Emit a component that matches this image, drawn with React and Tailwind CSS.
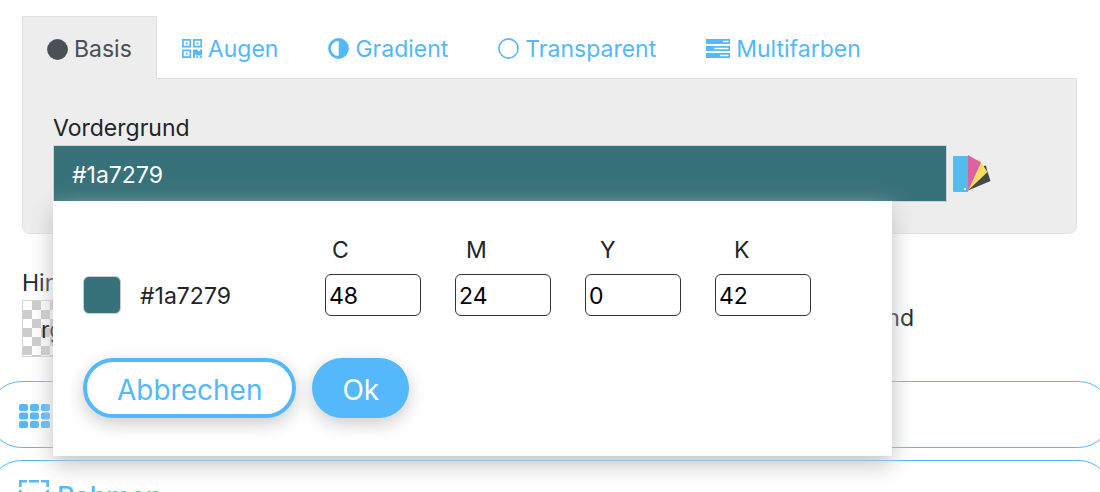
import React, { useState } from 'react';

const DotIcon = () => (
    <svg className="size-[21px]" viewBox="0 0 21 21" fill="currentColor">
        <circle cx="10.5" cy="10.5" r="10.4" />
    </svg>
);

const QrIcon = () => (
    <svg className="h-[19px] w-5" viewBox="0 0 20 19" fill="none" stroke="currentColor">
        <path strokeWidth="1.7" d="M.9.9h7.4v6.8H.9zM11.8.9h7.4v6.8h-7.4zM.9 11.3h7.4v6.8H.9z" />
        <path fill="currentColor" stroke="none" d="M3.7 3.4h1.8v1.8H3.7zM14.6 3.4h1.8v1.8h-1.8zM3.7 13.8h1.8v1.8H3.7zM11 10.4h4l1.5 1.6H18v-1.6h2v6h-5.5L13 15v4h-2zM14.2 17.2H16V19h-1.8zM17.8 17.2H20V19h-2.2z" />
    </svg>
);

const HalfIcon = () => (
    <svg className="size-[21px]" viewBox="0 0 21 21">
        <circle cx="10.5" cy="10.5" r="9" fill="none" stroke="currentColor" strokeWidth="2.8" />
        <path d="M10.7 1.5a9 9 0 0 1 0 18z" fill="currentColor" />
    </svg>
);

const RingIcon = () => (
    <svg className="size-[21px]" viewBox="0 0 21 21" fill="none" stroke="currentColor">
        <circle cx="10.5" cy="10.5" r="9.6" strokeWidth="1.6" />
    </svg>
);

const TasksIcon = () => (
    <svg className="h-[19px] w-6" viewBox="0 0 24 19" fill="currentColor" fillRule="evenodd">
        <path d="M0 0h24v5H0zM17 1.7v1.6h5.5V1.7z" />
        <path d="M0 7h24v5H0zM8.3 8.7v1.6h14.2V8.7z" />
        <path d="M0 14h24v5H0zM14 15.7v1.6h8.5v-1.6z" />
    </svg>
);

const SwatchFan = () => (
    <svg className="h-[37px] w-[38px]" viewBox="0 0 38 37">
        <path fill="#45474c" d="M31 11l2-.5 1 4.5 3.500 11L15 35.500z" />
        <path fill="#fddc62" d="M24 5.500L26.500 4 28 7.500l6.500 9.500L15 35.500z" />
        <path fill="#df629f" d="M15 0l13 7.500L15 36z" />
        <path fill="#55bbed" d="M1 1h14v36H1a1 1 0 0 1-1-1V2a1 1 0 0 1 1-1z" />
        <path fill="#d9f1fb" d="M11 33h2v2h-2z" />
    </svg>
);

const GridIcon = () => (
    <svg className="h-6 w-[31px]" viewBox="0 0 31 24" fill="currentColor">
        {[0, 8.5, 17].map(y =>
            [0, 11, 22].map(x => <rect key={`${x}-${y}`} x={x} y={y} width="9" height="7" rx="1.8" />)
        )}
    </svg>
);

const FrameIcon = () => (
    <svg className="size-[30px]" viewBox="0 0 30 30" fill="none" stroke="currentColor" strokeWidth="2.6">
        <path d="M1.3 7V1.3H8M10 1.3h10M22 1.3h6.7V7M28.7 10v10M28.7 22v6.7H22M20 28.7H10M8 28.7H1.3V22M1.3 20V10" />
    </svg>
);

const tabs = [
    { label: 'Basis', icon: <DotIcon /> },
    { label: 'Augen', icon: <QrIcon /> },
    { label: 'Gradient', icon: <HalfIcon /> },
    { label: 'Transparent', icon: <RingIcon /> },
    { label: 'Multifarben', icon: <TasksIcon /> },
];

const channels = ['C', 'M', 'Y', 'K'];

const App = () => {
    const [active, setActive] = useState('Basis');
    const [open, setOpen] = useState(true);
    const [color, setColor] = useState('#1a7279');
    const [cmyk, setCmyk] = useState({ C: '48', M: '24', Y: '0', K: '42' });

    return (
        <div className="h-screen overflow-hidden bg-white pt-4 font-['Inter',sans-serif] text-[23px] leading-9 text-[#212529]">
            <div className="mr-[23px] ml-[22px]">
                {/* Tabs */}
                <nav className="flex">
                    {tabs.map(tab => (
                        <button
                            key={tab.label}
                            type="button"
                            onClick={() => setActive(tab.label)}
                            className={
                                active === tab.label
                                    ? 'relative z-10 -mb-px flex h-[63px] items-center gap-1.5 border border-b-0 border-[#dee2e6] bg-[#ededed] px-6 pt-0.5 text-[#495057]'
                                    : 'flex h-[63px] items-center gap-1.5 border border-transparent px-6 pt-0.5 text-[#54b8fb]'
                            }
                        >
                            {tab.icon}
                            {tab.label}
                        </button>
                    ))}
                </nav>

                {/* Foreground color */}
                <div className="-mt-px rounded-b-lg border border-[#dee2e6] bg-[#ededed] px-[30px] pt-[30px] pb-[31px]">
                    <label htmlFor="foreground" className="block h-9 pt-px">Vordergrund</label>
                    <div className="relative flex items-center gap-1.5">
                        <input
                            id="foreground"
                            value={color}
                            onChange={e => setColor(e.target.value)}
                            className="h-[57px] w-[90%] border border-[#ced4da] bg-[#377179] px-[18px] pt-0.5 text-white outline-none"
                        />
                        <button type="button" aria-label="CMYK" onClick={() => setOpen(!open)}>
                            <SwatchFan />
                        </button>

                        {/* CMYK popover */}
                        {open && (
                            <div className="absolute top-14 left-0 z-20 w-[839px] bg-white px-[30px] pt-[31px] pb-[38px] shadow-[0_8px_22px_#c0c0c0]">
                                <div className="ml-[249px] flex">
                                    {channels.map(name => (
                                        <label key={name} htmlFor={`channel-${name}`} className="w-[134px] shrink-0">{name}</label>
                                    ))}
                                </div>
                                <div className="mt-1.5 flex items-center">
                                    <span className="size-[38px] rounded-md border border-[#ccc] bg-[#377179]" />
                                    <span className="ml-[19px] w-[185px] pt-0.5">{color}</span>
                                    <div className="flex gap-[34px]">
                                        {channels.map(name => (
                                            <input
                                                key={name}
                                                id={`channel-${name}`}
                                                value={cmyk[name]}
                                                onChange={e => setCmyk({ ...cmyk, [name]: e.target.value })}
                                                className="h-[42px] w-24 rounded-md border border-[#333] px-[3px] pt-0.5 text-black outline-none"
                                            />
                                        ))}
                                    </div>
                                </div>
                                <div className="mt-[42px] flex gap-4 text-[28px]">
                                    <button
                                        type="button"
                                        onClick={() => setOpen(false)}
                                        className="h-[60px] rounded-full border-4 border-[#54b8fb] bg-white px-[30px] pt-[3px] text-[#54b8fb] shadow-[0_6px_18px_rgba(0,0,0,0.2)]"
                                    >
                                        Abbrechen
                                    </button>
                                    <button
                                        type="button"
                                        onClick={() => setOpen(false)}
                                        className="h-[60px] rounded-full bg-[#54b8fb] px-[30px] pt-[3px] text-white shadow-[0_6px_18px_rgba(0,0,0,0.2)]"
                                    >
                                        Ok
                                    </button>
                                </div>
                            </div>
                        )}
                    </div>
                </div>

                {/* Background color */}
                <div className="mt-[30px]">
                    <label htmlFor="background" className="block h-9 pt-px">Hintergrund</label>
                    <div className="flex items-start">
                        <input
                            id="background"
                            defaultValue="rgba(0,0,0,0)"
                            className="h-[57px] w-1/2 border border-[#ced4da] bg-[conic-gradient(#ccc_25%,#fff_0_50%,#ccc_0_75%,#fff_0)] bg-[size:18px_18px] px-[18px] pt-0.5 text-black outline-none"
                        />
                        <label className="ml-auto flex items-center gap-3 pr-[163px]">
                            <input type="checkbox" className="size-5" />
                            Transparenter Hintergrund
                        </label>
                    </div>
                </div>
            </div>

            {/* Collapsed sections */}
            <div className="-mx-3 mt-6 flex flex-col gap-3 text-[27px] font-medium text-[#54b8fb]">
                <button type="button" className="flex h-[67px] shrink-0 items-center gap-2 rounded-full border border-[#54b8fb] px-[30px] pt-[3px]">
                    <GridIcon />
                    <span className="pt-1">Muster</span>
                </button>
                <button type="button" className="flex h-[67px] shrink-0 items-center gap-2 rounded-full border border-[#54b8fb] px-[30px] pt-[3px]">
                    <FrameIcon />
                    <span className="pt-1">Rahmen</span>
                </button>
            </div>
        </div>
    );
};

export default App;
